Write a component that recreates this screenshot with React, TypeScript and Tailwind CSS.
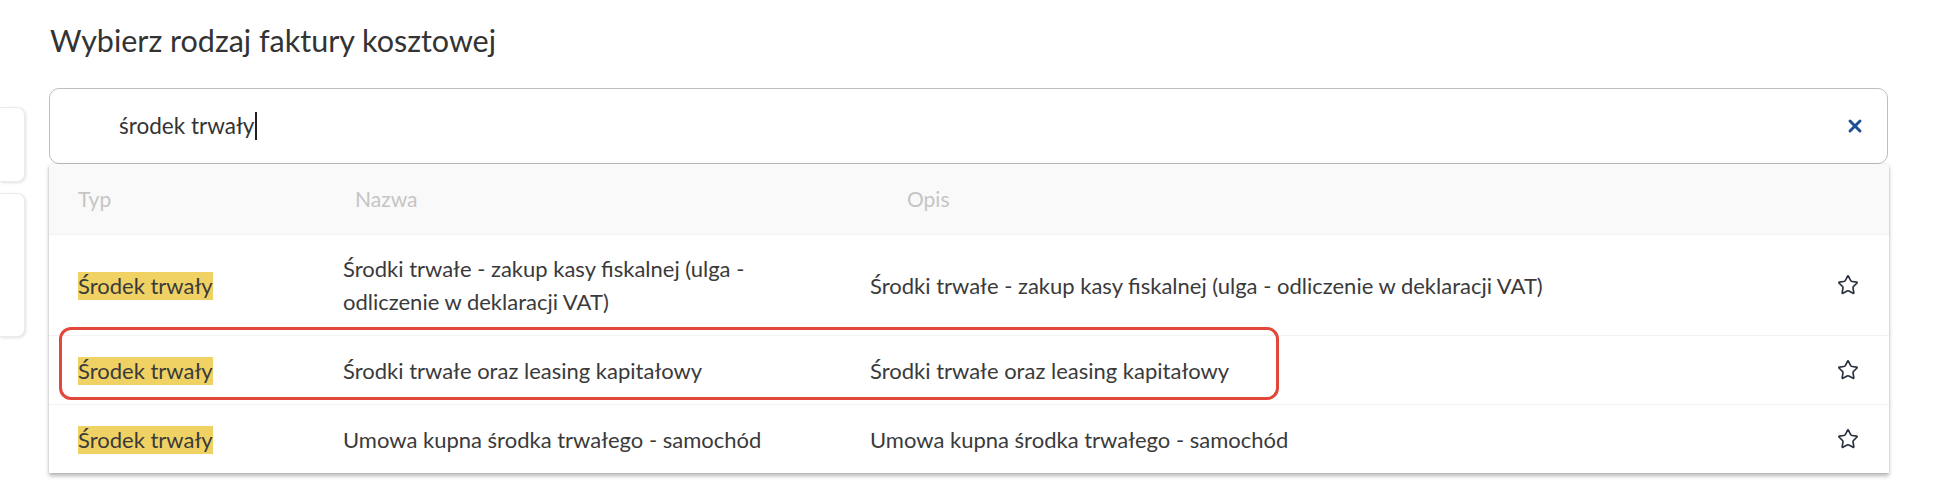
import { Star, X } from 'lucide-react';

interface Row {
  typ: string;
  nazwa: string;
  opis: string;
  tall?: boolean;
}

const rows: Row[] = [
  {
    typ: 'Środek trwały',
    nazwa: 'Środki trwałe - zakup kasy fiskalnej (ulga - odliczenie w deklaracji VAT)',
    opis: 'Środki trwałe - zakup kasy fiskalnej (ulga - odliczenie w deklaracji VAT)',
    tall: true,
  },
  {
    typ: 'Środek trwały',
    nazwa: 'Środki trwałe oraz leasing kapitałowy',
    opis: 'Środki trwałe oraz leasing kapitałowy',
  },
  {
    typ: 'Środek trwały',
    nazwa: 'Umowa kupna środka trwałego - samochód',
    opis: 'Umowa kupna środka trwałego - samochód',
  },
];

export default function App() {
  return (
    <div className="w-[1957px] h-[502px] bg-white overflow-hidden font-['Lato',sans-serif] text-[#3a3a3a]">
      <div className="flex">
        {/* cards of the page behind */}
        <div className="w-[25px] shrink-0 pt-[107px] flex flex-col gap-[11px]">
          <div className="h-[75px] bg-white rounded-r-lg border border-l-0 border-[#ececec] shadow-[1px_1px_3px_rgba(0,0,0,0.12)]" />
          <div className="h-[144px] bg-white rounded-r-lg border border-l-0 border-[#ececec] shadow-[1px_1px_3px_rgba(0,0,0,0.12)]" />
        </div>

        <div className="ml-[24px] w-[1839px]">
          <h1 className="pt-[20px] pl-px text-[30.5px] leading-[40px] text-[#333]">
            Wybierz rodzaj faktury kosztowej
          </h1>

          <div className="relative mt-[28px]">
            <div className="h-[76px] rounded-[10px] border border-[#bdbdbd] bg-white flex items-center pl-[69px] pr-[22px]">
              <span className="text-[22.5px] text-[#333]">środek trwały</span>
              <span className="ml-px h-[28px] w-[1.5px] bg-[#222]" />
              <X className="ml-auto text-[#1d4f94]" size={20} strokeWidth={3.5} />
            </div>

            <div className="absolute left-0 top-full w-[1840px] bg-white shadow-[0_3px_4px_rgba(0,0,0,0.28),0_0_1px_rgba(0,0,0,0.2)]">
              <div className="h-[70px] bg-[#f9f9f9] flex items-center text-[21px] text-[#c5c5c5]">
                <span className="pl-[29px] w-[306px]">Typ</span>
                <span className="w-[552px]">Nazwa</span>
                <span>Opis</span>
              </div>

              {rows.map((row, i) => (
                <div
                  key={i}
                  className={`relative flex items-center border-t border-[#f2f2f2] text-[22px] leading-[33px] ${row.tall ? 'h-[101px]' : 'h-[69px]'}`}
                >
                  <div className="pl-[29px] w-[294px] shrink-0">
                    <span className="bg-[#f0d264] leading-[28px] inline-block">{row.typ}</span>
                  </div>
                  <div className="w-[527px] shrink-0 pr-[50px]">{row.nazwa}</div>
                  <div className="flex-1">{row.opis}</div>
                  <Star className="mr-[30px] text-[#2b3340]" size={22} strokeWidth={1.8} />
                  {i === 1 && (
                    <div className="absolute left-[10px] top-[-9px] w-[1220px] h-[73px] rounded-[12px] border-[3px] border-[#e2483a] pointer-events-none" />
                  )}
                </div>
              ))}
            </div>
          </div>
        </div>
      </div>
    </div>
  );
}
